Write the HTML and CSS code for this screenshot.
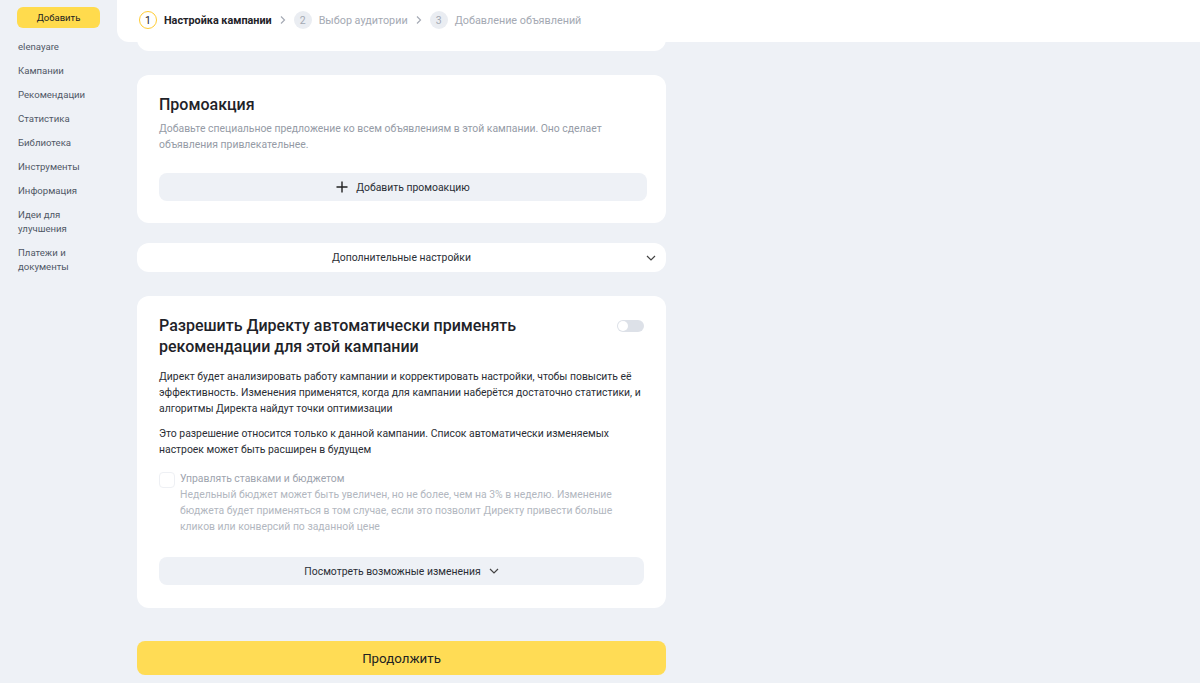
FILE: index.html
```html
<!DOCTYPE html>
<html lang="ru">
<head>
<meta charset="utf-8">
<link rel="stylesheet" href="styles.css">
</head>
<body>
<div class="page">
  <aside class="sidebar">
    <button class="add-btn">Добавить</button>
    <nav class="menu">
      <a class="menu-item">elenayare</a>
      <a class="menu-item">Кампании</a>
      <a class="menu-item">Рекомендации</a>
      <a class="menu-item">Статистика</a>
      <a class="menu-item">Библиотека</a>
      <a class="menu-item">Инструменты</a>
      <a class="menu-item">Информация</a>
      <a class="menu-item">Идеи для<br>улучшения</a>
      <a class="menu-item">Платежи и<br>документы</a>
    </nav>
  </aside>
  <main class="main">
    <header class="steps">
      <div class="step active"><span class="num">1</span><span class="label">Настройка кампании</span></div>
      <svg class="sep" width="8" height="10" viewBox="0 0 8 10"><path d="M2 1.5 L5.5 5 L2 8.5" fill="none" stroke="#a6abb5" stroke-width="1.2"/></svg>
      <div class="step"><span class="num">2</span><span class="label">Выбор аудитории</span></div>
      <svg class="sep" width="8" height="10" viewBox="0 0 8 10"><path d="M2 1.5 L5.5 5 L2 8.5" fill="none" stroke="#a6abb5" stroke-width="1.2"/></svg>
      <div class="step"><span class="num">3</span><span class="label">Добавление объявлений</span></div>
    </header>
    <div class="content">
      <div class="card card-tail"></div>

      <section class="card promo">
        <h2 class="card-title">Промоакция</h2>
        <p class="muted">Добавьте специальное предложение ко всем объявлениям в этой кампании. Оно сделает объявления привлекательнее.</p>
        <button class="gray-btn"><svg width="12" height="12" viewBox="0 0 12 12"><path d="M6 0.5 V11.5 M0.5 6 H11.5" stroke="#222" stroke-width="1.4"/></svg><span>Добавить промоакцию</span></button>
      </section>

      <section class="card extra">
        <span>Дополнительные настройки</span>
        <svg class="chev" width="10" height="6" viewBox="0 0 10 6"><path d="M1 1 L5 5 L9 1" fill="none" stroke="#444" stroke-width="1.2"/></svg>
      </section>

      <section class="card auto">
        <div class="auto-head">
          <h2 class="card-title">Разрешить Директу автоматически применять рекомендации для этой кампании</h2>
          <span class="toggle"><span class="knob"></span></span>
        </div>
        <p class="text">Директ будет анализировать работу кампании и корректировать настройки, чтобы повысить её эффективность. Изменения применятся, когда для кампании наберётся достаточно статистики, и алгоритмы Директа найдут точки оптимизации</p>
        <p class="text">Это разрешение относится только к данной кампании. Список автоматически изменяемых настроек может быть расширен в будущем</p>
        <div class="check-row">
          <span class="checkbox"></span>
          <div class="check-text">
            <div class="check-label">Управлять ставками и бюджетом</div>
            <div class="check-desc">Недельный бюджет может быть увеличен, но не более, чем на 3% в неделю. Изменение бюджета будет применяться в том случае, если это позволит Директу привести больше кликов или конверсий по заданной цене</div>
          </div>
        </div>
        <button class="gray-btn"><span>Посмотреть возможные изменения</span><svg width="10" height="6" viewBox="0 0 10 6"><path d="M1 1 L5 5 L9 1" fill="none" stroke="#444" stroke-width="1.2"/></svg></button>
      </section>

      <button class="continue">Продолжить</button>
    </div>
  </main>
</div>
</body>
</html>
```

FILE: styles.css
```css
* { box-sizing: border-box; }
html, body { margin: 0; padding: 0; }
body {
  background: #eef1f6;
  font-family: Roboto, "Noto Sans", sans-serif;
  color: #1f2329;
  width: 1200px;
  height: 683px;
  overflow: hidden;
}
.page { display: flex; }
.sidebar {
  width: 117px;
  flex: none;
  padding: 7px 0 0 17px;
}
.add-btn {
  display: block;
  width: 83px;
  height: 21px;
  border: none;
  border-radius: 6px;
  background: #ffdb4d;
  font-family: inherit;
  font-size: 9.5px;
  color: #222;
  padding: 0;
}
.menu {
  display: flex;
  flex-direction: column;
  gap: 10px;
  margin-top: 12px;
  padding-left: 1px;
}
.menu-item {
  font-size: 9.6px;
  line-height: 14px;
  color: #505866;
}
.main { flex: 1; }
.steps {
  height: 42px;
  background: #fff;
  border-bottom-left-radius: 12px;
  display: flex;
  align-items: center;
  padding: 0 0 2px 22px;
  gap: 7px;
  font-size: 10.8px;
}
.step { display: flex; align-items: center; gap: 7px; color: #a4a9b3; }
.step .num {
  width: 18px; height: 18px;
  border-radius: 50%;
  background: #eaedf2;
  display: flex; align-items: center; justify-content: center;
  font-size: 10.5px;
  color: #a4a9b3;
}
.step.active .num { background: #fff; border: 1px solid #ffcc33; color: #222; }
.step.active .label { color: #1f2329; font-weight: 700; }
.content {
  width: 529px;
  margin-left: 20px;
  display: flex;
  flex-direction: column;
}
.card {
  background: #fff;
  border-radius: 12px;
}
.card-tail {
  height: 20px;
  margin-top: -11px;
  border-top-left-radius: 0;
  border-top-right-radius: 0;
}
.promo {
  margin-top: 24px;
  padding: 19px 19px 22px 22px;
}
.card-title {
  margin: 0;
  font-size: 16px;
  font-weight: 500;
  line-height: 21px;
  color: #1f2329;
}
.muted {
  margin: 6px 0 0;
  font-size: 10.4px;
  line-height: 16px;
  color: #959ba6;
}
.gray-btn {
  width: 100%;
  height: 28px;
  border: none;
  border-radius: 8px;
  background: #eef1f6;
  font-family: inherit;
  font-size: 10.4px;
  color: #2a2e35;
  display: flex;
  align-items: center;
  justify-content: center;
  gap: 8px;
}
.promo .gray-btn { margin-top: 20px; }
.extra {
  margin-top: 20px;
  height: 29px;
  display: flex;
  align-items: center;
  justify-content: center;
  position: relative;
  font-size: 10.4px;
  color: #2a2e35;
}
.extra .chev { position: absolute; right: 10px; top: 12px; }
.auto {
  margin-top: 24px;
  padding: 19px 22px 23px 22px;
}
.auto-head { display: flex; justify-content: space-between; align-items: flex-start; }
.auto-head .card-title { width: 400px; }
.toggle {
  width: 27px; height: 12px;
  border-radius: 6px;
  background: #dde1e8;
  margin-top: 5px;
  position: relative;
}
.knob {
  position: absolute; left: 1px; top: 1px;
  width: 10px; height: 10px; border-radius: 50%; background: #fff;
}
.text {
  margin: 0;
  font-size: 10.4px;
  line-height: 16px;
  color: #2a2e35;
}
.auto-head + .text { margin-top: 12px; }
.text + .text { margin-top: 9px; }
.check-row { display: flex; gap: 5px; margin-top: 13px; }
.checkbox {
  width: 16px; height: 16px; flex: none;
  border: 1px solid #eef0f4;
  border-radius: 4px;
  margin-top: 1px;
}
.check-label { font-size: 10.4px; line-height: 16px; color: #9ea4ae; }
.check-desc { font-size: 10.4px; line-height: 16px; color: #b2b7c0; }
.auto .gray-btn { margin-top: 22px; }
.continue {
  margin-top: 33px;
  height: 34px;
  width: 100%;
  border: none;
  border-radius: 8px;
  background: #ffdc55;
  font-family: inherit;
  font-size: 13.3px;
  color: #222;
}
```
